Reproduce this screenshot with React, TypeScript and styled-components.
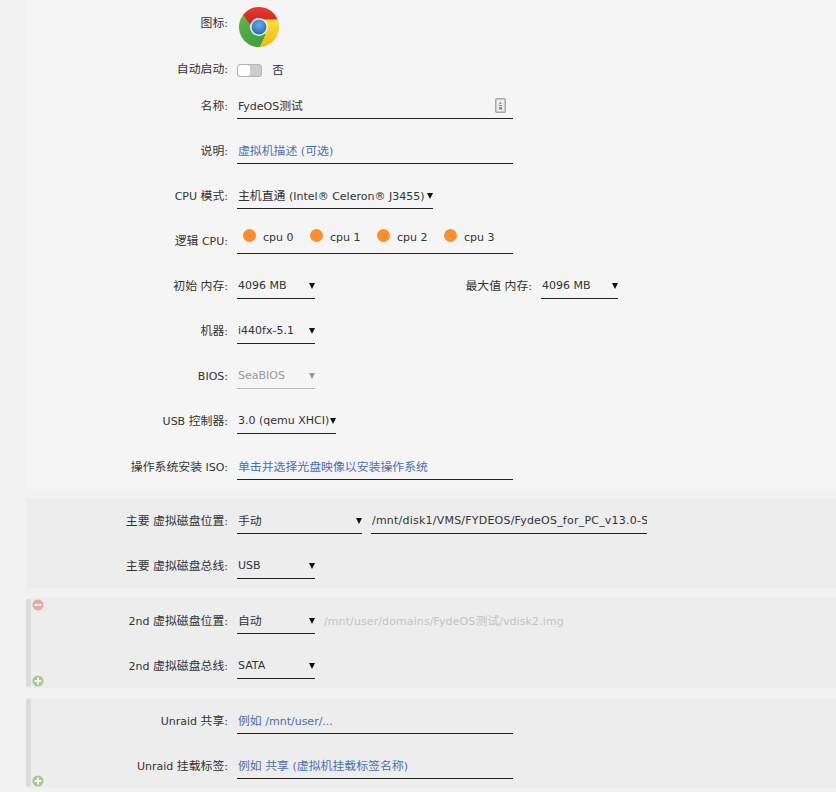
import React from 'react'
import styled, { createGlobalStyle } from 'styled-components'

const GlobalStyle = createGlobalStyle`
  html, body {
    margin: 0;
    padding: 0;
    background: #f2f2f2;
    overflow: hidden;
  }
  body {
    font-family: "DejaVu Sans", "Noto Sans CJK SC", sans-serif;
    font-size: 11px;
    color: #333;
  }
`

const Page = styled.div`
  width: 836px;
  height: 792px;
  padding-left: 26px;
  box-sizing: border-box;
  overflow: hidden;
`

const MainPanel = styled.div`
  background: #f5f5f5;
  height: 489px;
  margin-bottom: 9px;
`

const DiskPanel = styled.div`
  position: relative;
  box-sizing: border-box;
  background: #ededed;
  height: 90px;
  margin-bottom: 10px;
`

const Bar = styled.div`
  position: absolute;
  left: 0;
  top: 1px;
  bottom: 1px;
  width: 5px;
  background: #dcdcdc;
  border-radius: 2px;
`

const Row = styled.div<{ $height: number }>`
  display: flex;
  align-items: flex-end;
  height: ${(p) => p.$height}px;
`

const Label = styled.div<{ $width?: number; $pad?: number }>`
  width: ${(p) => p.$width ?? 202}px;
  flex: none;
  text-align: right;
  line-height: 14px;
  padding-bottom: ${(p) => p.$pad ?? 5}px;
  white-space: nowrap;
`

const Field = styled.div<{ $width: number; $left?: number; $muted?: boolean; $spacing?: number }>`
  position: relative;
  box-sizing: border-box;
  flex: none;
  width: ${(p) => p.$width}px;
  margin-left: ${(p) => p.$left ?? 9}px;
  height: 31px;
  padding: 11px 1px 0;
  line-height: 14px;
  letter-spacing: ${(p) => p.$spacing ?? 0}px;
  border-bottom: 1px solid ${(p) => (p.$muted ? '#bbb' : '#222')};
  color: ${(p) => (p.$muted ? '#999' : '#333')};
  white-space: nowrap;
  overflow: hidden;
`

const CpuField = styled(Field)`
  padding: 0 1px;
`

const Han = styled.span`
  font-size: 11.88px;
  letter-spacing: 0;
`

const Placeholder = styled.span`
  color: #4a6fb5;
`

const PathText = styled.div`
  margin-left: 9px;
  height: 31px;
  padding-top: 11px;
  box-sizing: border-box;
  line-height: 14px;
  letter-spacing: 0.1px;
  color: #c4c4c4;
  white-space: nowrap;
`

const Arrow = styled.span<{ $muted?: boolean }>`
  position: absolute;
  right: 0;
  top: 15px;
  width: 0;
  height: 0;
  border-left: 3px solid transparent;
  border-right: 3px solid transparent;
  border-top: 6px solid ${(p) => (p.$muted ? '#999' : '#111')};
`

const IconCell = styled.div`
  margin-left: 10px;
  height: 42px;
  align-self: flex-start;
  margin-top: 6px;
`

const ToggleWrap = styled.div`
  display: flex;
  align-items: center;
  gap: 10px;
  margin-left: 9px;
  line-height: 13px;
`

const Toggle = styled.div`
  box-sizing: border-box;
  width: 25px;
  height: 13px;
  border: 1px solid #b5b5b5;
  border-radius: 3px;
  background: #ccc;
`

const Knob = styled.div`
  width: 12px;
  height: 11px;
  background: #fff;
  border-radius: 3px;
`

const CpuList = styled.div`
  display: flex;
  height: 30px;
  padding-left: 5px;
`

const Cpu = styled.div`
  display: flex;
  flex: none;
  width: 67px;
  align-items: center;
  gap: 7px;
`

const Dot = styled.span`
  width: 13px;
  height: 13px;
  margin-top: -6px;
  border-radius: 50%;
  background: #ff8c2f;
`

const SideIcon = styled.svg<{ $top?: number; $bottom?: number }>`
  position: absolute;
  left: 6px;
  ${(p) => (p.$top !== undefined ? `top: ${p.$top}px;` : '')}
  ${(p) => (p.$bottom !== undefined ? `bottom: ${p.$bottom}px;` : '')}
`

const NameIcon = styled.svg`
  position: absolute;
  right: 7px;
  top: 10px;
`

// CJK runs are a bit bigger than the latin text in the reference
const Mixed = ({ text }: { text: string }) => (
  <>
    {text.split(/([\u3400-\u9fff]+)/).map((part, i) =>
      i % 2 === 1 ? <Han key={i}>{part}</Han> : part
    )}
  </>
)

const ChromeLogo = () => (
  <svg width="42" height="42" viewBox="0 0 42 42">
    <defs>
      <linearGradient id="red" x1="0" y1="0" x2="0" y2="1">
        <stop offset="0" stopColor="#e8392f" />
        <stop offset="1" stopColor="#c8201f" />
      </linearGradient>
      <linearGradient id="green" x1="0" y1="0" x2="0.6" y2="1">
        <stop offset="0" stopColor="#5fb947" />
        <stop offset="1" stopColor="#3f9e3f" />
      </linearGradient>
      <linearGradient id="yellow" x1="0" y1="0" x2="0" y2="1">
        <stop offset="0" stopColor="#ffdf3a" />
        <stop offset="1" stopColor="#f4b70f" />
      </linearGradient>
      <radialGradient id="blue" cx="0.5" cy="0.35" r="0.7">
        <stop offset="0" stopColor="#6aa9e3" />
        <stop offset="1" stopColor="#2468b4" />
      </radialGradient>
    </defs>
    <circle cx="21" cy="21" r="20.4" fill="#d8d8d8" opacity="0.5" />
    <path d="M5 9 L14 21 L28 28 L22 41 A20 20 0 0 1 5 9 Z" fill="url(#green)" />
    <path d="M39.5 13.5 A20 20 0 0 1 22 41 L28 28 L21 13.5 Z" fill="url(#yellow)" />
    <path d="M5 9 A20 20 0 0 1 39.5 13.5 L21 13.5 L13 20 Z" fill="url(#red)" />
    <circle cx="21" cy="21" r="9" fill="#e9eef2" />
    <circle cx="21" cy="21" r="7.4" fill="url(#blue)" />
  </svg>
)

const MinusIcon = () => (
  <SideIcon $top={1} width="12" height="12" viewBox="0 0 12 12">
    <circle cx="6" cy="6" r="5.6" fill="#f0a5a8" />
    <rect x="2.5" y="5" width="7" height="2" fill="#f6f6f6" />
  </SideIcon>
)

const PlusIcon = () => (
  <SideIcon $bottom={1} width="12" height="12" viewBox="0 0 12 12">
    <circle cx="6" cy="6" r="5.6" fill="#a9c88c" />
    <rect x="2.5" y="5" width="7" height="2" fill="#f6f6f6" />
    <rect x="5" y="2.5" width="2" height="7" fill="#f6f6f6" />
  </SideIcon>
)

const Select = ({
  width,
  left,
  muted,
  children
}: {
  width: number
  left?: number
  muted?: boolean
  children: React.ReactNode
}) => (
  <Field $width={width} $left={left} $muted={muted}>
    {children}
    <Arrow $muted={muted} />
  </Field>
)

const cpus = ['cpu 0', 'cpu 1', 'cpu 2', 'cpu 3']

export default function App() {
  return (
    <Page>
      <GlobalStyle />
      <MainPanel>
        <Row $height={48}>
          <Label $pad={17}><Mixed text="图标:" /></Label>
          <IconCell>
            <ChromeLogo />
          </IconCell>
        </Row>
        <Row $height={29}>
          <Label $pad={0}><Mixed text="自动启动:" /></Label>
          <ToggleWrap>
            <Toggle>
              <Knob />
            </Toggle>
            <Han>否</Han>
          </ToggleWrap>
        </Row>
        <Row $height={42}>
          <Label><Mixed text="名称:" /></Label>
          <Field $width={276}>
            <Mixed text="FydeOS测试" />
            <NameIcon width="11" height="15" viewBox="0 0 11 15">
              <rect x="0.75" y="0.75" width="9.5" height="13.5" rx="1" fill="#ececec" stroke="#a8a8a8" strokeWidth="1.5" />
              <path d="M5.5 3.5 L6.8 6 H4.2 Z M4 7 H7 V8 H4 Z M4 9 H7 V11.5 H4 Z" fill="#8a8a8a" />
            </NameIcon>
          </Field>
        </Row>
        <Row $height={45}>
          <Label><Mixed text="说明:" /></Label>
          <Field $width={276}>
            <Placeholder><Mixed text="虚拟机描述 (可选)" /></Placeholder>
          </Field>
        </Row>
        <Row $height={45}>
          <Label><Mixed text="CPU 模式:" /></Label>
          <Select width={196}><Mixed text="主机直通 (Intel® Celeron® J3455)" /></Select>
        </Row>
        <Row $height={45}>
          <Label><Mixed text="逻辑 CPU:" /></Label>
          <CpuField $width={276}>
            <CpuList>
              {cpus.map((c) => (
                <Cpu key={c}>
                  <Dot />
                  {c}
                </Cpu>
              ))}
            </CpuList>
          </CpuField>
        </Row>
        <Row $height={45}>
          <Label><Mixed text="初始 内存:" /></Label>
          <Select width={78}>4096 MB</Select>
          <Label $width={217}><Mixed text="最大值 内存:" /></Label>
          <Select width={77}>4096 MB</Select>
        </Row>
        <Row $height={45}>
          <Label><Mixed text="机器:" /></Label>
          <Select width={78}>i440fx-5.1</Select>
        </Row>
        <Row $height={45}>
          <Label>BIOS:</Label>
          <Select width={78} muted>
            SeaBIOS
          </Select>
        </Row>
        <Row $height={45}>
          <Label><Mixed text="USB 控制器:" /></Label>
          <Select width={99}>3.0 (qemu XHCI)</Select>
        </Row>
        <Row $height={46}>
          <Label><Mixed text="操作系统安装 ISO:" /></Label>
          <Field $width={276}>
            <Placeholder><Mixed text="单击并选择光盘映像以安装操作系统" /></Placeholder>
          </Field>
        </Row>
      </MainPanel>

      <DiskPanel>
        <Row $height={36}>
          <Label><Mixed text="主要 虚拟磁盘位置:" /></Label>
          <Select width={125}><Mixed text="手动" /></Select>
          <Field $width={276} $spacing={0.22}>/mnt/disk1/VMS/FYDEOS/FydeOS_for_PC_v13.0-S</Field>
        </Row>
        <Row $height={45}>
          <Label><Mixed text="主要 虚拟磁盘总线:" /></Label>
          <Select width={78}>USB</Select>
        </Row>
      </DiskPanel>

      <DiskPanel>
        <Bar />
        <MinusIcon />
        <PlusIcon />
        <Row $height={36}>
          <Label><Mixed text="2nd 虚拟磁盘位置:" /></Label>
          <Select width={78}><Mixed text="自动" /></Select>
          <PathText><Mixed text="/mnt/user/domains/FydeOS测试/vdisk2.img" /></PathText>
        </Row>
        <Row $height={45}>
          <Label><Mixed text="2nd 虚拟磁盘总线:" /></Label>
          <Select width={78}>SATA</Select>
        </Row>
      </DiskPanel>

      <DiskPanel>
        <Bar />
        <PlusIcon />
        <Row $height={36}>
          <Label><Mixed text="Unraid 共享:" /></Label>
          <Field $width={276}>
            <Placeholder><Mixed text="例如 /mnt/user/..." /></Placeholder>
          </Field>
        </Row>
        <Row $height={45}>
          <Label><Mixed text="Unraid 挂载标签:" /></Label>
          <Field $width={276}>
            <Placeholder><Mixed text="例如 共享 (虚拟机挂载标签名称)" /></Placeholder>
          </Field>
        </Row>
      </DiskPanel>
    </Page>
  )
}
